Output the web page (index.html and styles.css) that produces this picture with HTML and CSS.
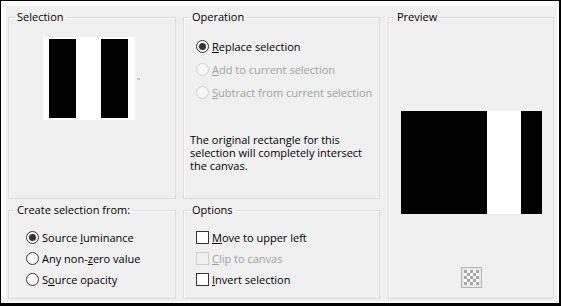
FILE: index.html
```html
<!DOCTYPE html>
<html>
<head>
<meta charset="utf-8">
<link rel="stylesheet" href="styles.css">
</head>
<body>
<div class="frame">
  <div class="panel">
    <fieldset class="grp sel">
      <legend>Selection</legend>
      <div class="thumb-row">
        <div class="thumb">
          <span class="bk b1"></span><span class="wh b2"></span><span class="bk b3"></span>
        </div>
        <span class="drop"></span>
      </div>
    </fieldset>

    <fieldset class="grp op">
      <legend>Operation</legend>
      <div class="list op-list">
        <label class="opt"><span class="radio on"></span><span><u>R</u>eplace selection</span></label>
        <label class="opt dis"><span class="radio"></span><span><u>A</u>dd to current selection</span></label>
        <label class="opt dis"><span class="radio"></span><span><u>S</u>ubtract from current selection</span></label>
      </div>
      <p class="note">The original rectangle for this selection will completely intersect the canvas.</p>
    </fieldset>

    <fieldset class="grp prev">
      <legend>Preview</legend>
      <div class="pv">
        <span class="pv-b1"></span><span class="pv-w"></span><span class="pv-b2"></span>
      </div>
      <div class="chk-btn">
        <svg width="21" height="21" viewBox="0 0 21 21">
          <rect x="0.5" y="0.5" width="20" height="20" fill="#e9e9e9" stroke="#b4b4b4"/>
          <rect x="3" y="3" width="15" height="15" fill="#ffffff"/>
          <g fill="#a6a6a6">
            <rect x="3" y="3" width="3" height="3"/><rect x="9" y="3" width="3" height="3"/><rect x="15" y="3" width="3" height="3"/>
            <rect x="6" y="6" width="3" height="3"/><rect x="12" y="6" width="3" height="3"/>
            <rect x="3" y="9" width="3" height="3"/><rect x="9" y="9" width="3" height="3"/><rect x="15" y="9" width="3" height="3"/>
            <rect x="6" y="12" width="3" height="3"/><rect x="12" y="12" width="3" height="3"/>
            <rect x="3" y="15" width="3" height="3"/><rect x="9" y="15" width="3" height="3"/><rect x="15" y="15" width="3" height="3"/>
          </g>
        </svg>
      </div>
    </fieldset>

    <fieldset class="grp create">
      <legend>Create selection from:</legend>
      <div class="list cr-list">
        <label class="opt"><span class="radio on"></span><span>Source <u>l</u>uminance</span></label>
        <label class="opt"><span class="radio"></span><span>Any non-<u>z</u>ero value</span></label>
        <label class="opt"><span class="radio"></span><span>S<u>o</u>urce opacity</span></label>
      </div>
    </fieldset>

    <fieldset class="grp opts">
      <legend>Options</legend>
      <div class="list cb-list">
        <label class="opt"><span class="box"></span><span><u>M</u>ove to upper left</span></label>
        <label class="opt dis"><span class="box"></span><span><u>C</u>lip to canvas</span></label>
        <label class="opt"><span class="box"></span><span><u>I</u>nvert selection</span></label>
      </div>
    </fieldset>
  </div>
</div>
</body>
</html>
```

FILE: styles.css
```css
* { box-sizing: border-box; }
html, body { margin: 0; padding: 0; background: #ffffff; }
body {
  font-family: "Open Sans", "Noto Sans", sans-serif;
  font-size: 11px;
  color: #000;
}
.frame {
  width: 561px;
  height: 306px;
  border-top: 1px solid #000;
  border-left: 1px solid #000;
  border-right: 2px solid #000;
  border-bottom: 3px solid #000;
  background: #fbfbfb;
  padding: 5px 2px 2px 5px;
}
.panel {
  height: 100%;
  background: #f0f0f0;
  padding: 3px 0 0 2px;
  display: grid;
  grid-template-columns: 168px 197px 167px;
  grid-template-rows: 190px 97px;
  column-gap: 7px;
  row-gap: 3px;
}
.grp {
  margin: 0;
  padding: 0;
  min-width: 0;
  border: 1px solid #dcdcdc;
  box-shadow: inset 1px 1px 0 #fafafa;
}
.grp legend {
  margin-left: 6px;
  padding: 0 2px;
  line-height: 16px;
  font-size: 11px;
}
.sel { grid-column: 1; grid-row: 1; }
.op { grid-column: 2; grid-row: 1; }
.prev { grid-column: 3; grid-row: 1 / span 2; margin-left: 1px; width: 166px; }
.create { grid-column: 1; grid-row: 2; }
.opts { grid-column: 2; grid-row: 2; }

/* selection thumbnail */
.thumb-row {
  display: flex;
  align-items: center;
  gap: 2px;
  margin: 12px 0 0 34px;
}
.thumb {
  width: 92px;
  height: 83px;
  background: #fff;
  padding: 2px 7px 2px 6px;
  display: flex;
}
.thumb span { display: block; height: 79px; }
.bk { background: #000; width: 27px; }
.wh { background: #fff; width: 25px; }
.drop {
  width: 3px;
  height: 2px;
  background: #c4c4c4;
}

/* option lists */
.list { display: flex; flex-direction: column; }
.opt {
  display: flex;
  align-items: center;
  gap: 3px;
  white-space: nowrap;
  line-height: 15px;
}
.opt u { text-decoration: underline; text-underline-offset: 1px; }
.opt.dis { color: #a0a0a0; }
.op-list { margin: 10px 0 0 12px; }
.op-list .opt { height: 23px; }
.cr-list { margin: 9px 0 0 17px; }
.cr-list .opt { height: 21px; }
.cb-list { margin: 9px 0 0 12px; }
.cb-list .opt { height: 21px; }

.radio {
  width: 13px;
  height: 13px;
  border-radius: 50%;
  border: 1px solid #333;
  background: #fff;
  position: relative;
  flex: none;
}
.radio.on::after {
  content: "";
  position: absolute;
  left: 2px;
  top: 2px;
  width: 7px;
  height: 7px;
  border-radius: 50%;
  background: #333;
}
.dis .radio { border-color: #cfcfcf; background: #f7f7f7; }
.box {
  width: 13px;
  height: 13px;
  border: 1px solid #333;
  background: #fff;
  flex: none;
}
.dis .box { border-color: #cccccc; background: #f0f0f0; }

.note {
  margin: 29px 0 0 6px;
  line-height: 13px;
  width: 180px;
}

/* preview */
.pv {
  display: flex;
  margin: 86px 0 0 12px;
  width: 141px;
  height: 103px;
}
.pv-b1 { width: 86px; background: #000; }
.pv-w { width: 34px; background: #fff; }
.pv-b2 { width: 21px; background: #000; }
.chk-btn {
  margin: 53px 0 0 72px;
  width: 21px;
  height: 21px;
}
.chk-btn svg { display: block; }
```
